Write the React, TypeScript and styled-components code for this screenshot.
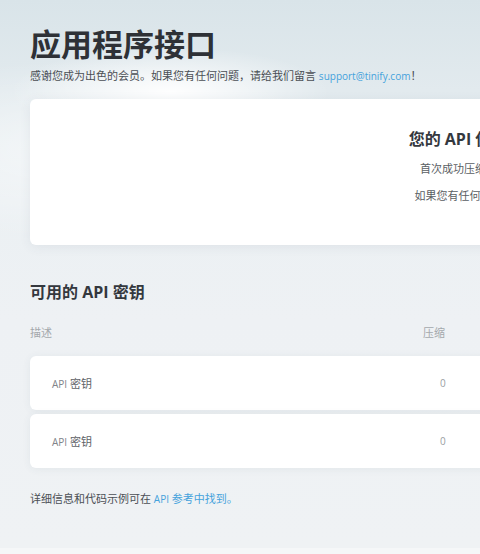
import React from "react";
import styled, { createGlobalStyle } from "styled-components";

const GlobalStyle = createGlobalStyle`
  html, body {
    margin: 0;
    padding: 0;
    overflow: hidden;
    background: #f5f7f8;
  }
  body {
    font-family: "Open Sans", "Noto Sans CJK SC", sans-serif;
    -webkit-font-smoothing: antialiased;
  }
`;

const Page = styled.main`
  width: 1100px;
  box-sizing: border-box;
  padding: 25px 30px 40px;
  background:
    radial-gradient(ellipse 160px 45px at 170px 92px, rgba(255, 255, 255, 0.95), rgba(255, 255, 255, 0) 100%),
    radial-gradient(ellipse 260px 90px at 80px 150px, rgba(255, 255, 255, 0.55), rgba(255, 255, 255, 0) 100%),
    linear-gradient(180deg, #d9e4e9 0px, #e2eaee 90px, #ebf0f3 200px, #eef1f4 320px, #eff2f4 100%);
`;

const Content = styled.div`
  width: 1000px;
`;

const Title = styled.h1`
  margin: 0;
  font-size: 31px;
  line-height: 38px;
  font-weight: 700;
  color: #2e3136;
`;

const Lead = styled.p`
  margin: 4px 0 0;
  font-size: 11px;
  line-height: 18px;
  color: #4b4f55;
`;

const Link = styled.a<{ $small?: boolean }>`
  color: #45a2dc;
  text-decoration: none;
  font-size: ${(p) => (p.$small ? "10px" : "inherit")};
`;

const Card = styled.section`
  margin-top: 14px;
  background: #fff;
  border-radius: 6px;
  box-shadow: 0 2px 12px rgba(60, 80, 100, 0.08);
  padding: 28px 20px 40px;
  text-align: center;
`;

const CardHeading = styled.h2`
  margin: 0;
  font-size: 16px;
  line-height: 24px;
  font-weight: 700;
  color: #34383e;
`;

const CardText = styled.p`
  margin: 9px 0 0;
  font-size: 11px;
  line-height: 18px;
  color: #5a5e63;
`;

const SectionHeading = styled.h2`
  margin: 35px 0 0;
  font-size: 16px;
  line-height: 24px;
  font-weight: 700;
  color: #34383e;
`;

const TableHead = styled.div`
  margin-top: 20px;
  display: grid;
  grid-template-columns: 393px 1fr;
  font-size: 11px;
  line-height: 18px;
  color: #a4a8ac;
`;

const Rows = styled.div`
  margin-top: 14px;
  display: flex;
  flex-direction: column;
  gap: 4px;
`;

const Row = styled.div`
  display: grid;
  grid-template-columns: 388px 1fr;
  align-items: center;
  height: 54px;
  padding-left: 22px;
  background: #fff;
  border-radius: 6px;
  box-shadow: 0 1px 8px rgba(60, 80, 100, 0.07);
  font-size: 11px;
  color: #5e6267;
`;

const KeyName = styled.span`
  .latin {
    font-size: 10px;
    color: #80848a;
  }
`;

const Count = styled.span`
  color: #9a9ea3;
  font-size: 10px;
`;

const Footnote = styled.p`
  margin: 22px 0 0;
  font-size: 11px;
  line-height: 18px;
  color: #4b4f55;
`;

const keys = [
  { id: 1, name: "密钥", count: 0 },
  { id: 2, name: "密钥", count: 0 },
];

function App(): JSX.Element {
  return (
    <>
      <GlobalStyle />
      <Page>
        <Content>
          <Title>应用程序接口</Title>
          <Lead>
            感谢您成为出色的会员。如果您有任何问题，请给我们留言{" "}
            <Link href="#" $small>
              support@tinify.com
            </Link>
            ！
          </Lead>

          <Card>
            <CardHeading>您的 API 使用量统计将显示在这里</CardHeading>
            <CardText>首次成功压缩图片后，这里将显示使用情况。</CardText>
            <CardText>如果您有任何问题，请随时发送电子邮件联系。</CardText>
          </Card>

          <SectionHeading>可用的 API 密钥</SectionHeading>
          <TableHead>
            <span>描述</span>
            <span>压缩</span>
          </TableHead>
          <Rows>
            {keys.map((k) => (
              <Row key={k.id}>
                <KeyName>
                  <span className="latin">API</span> {k.name}
                </KeyName>
                <Count>{k.count}</Count>
              </Row>
            ))}
          </Rows>

          <Footnote>
            详细信息和代码示例可在{" "}
            <Link href="#">
              <Link as="span" $small>
                API
              </Link>{" "}
              参考中找到。
            </Link>
          </Footnote>
        </Content>
      </Page>
    </>
  );
}

export default App;
